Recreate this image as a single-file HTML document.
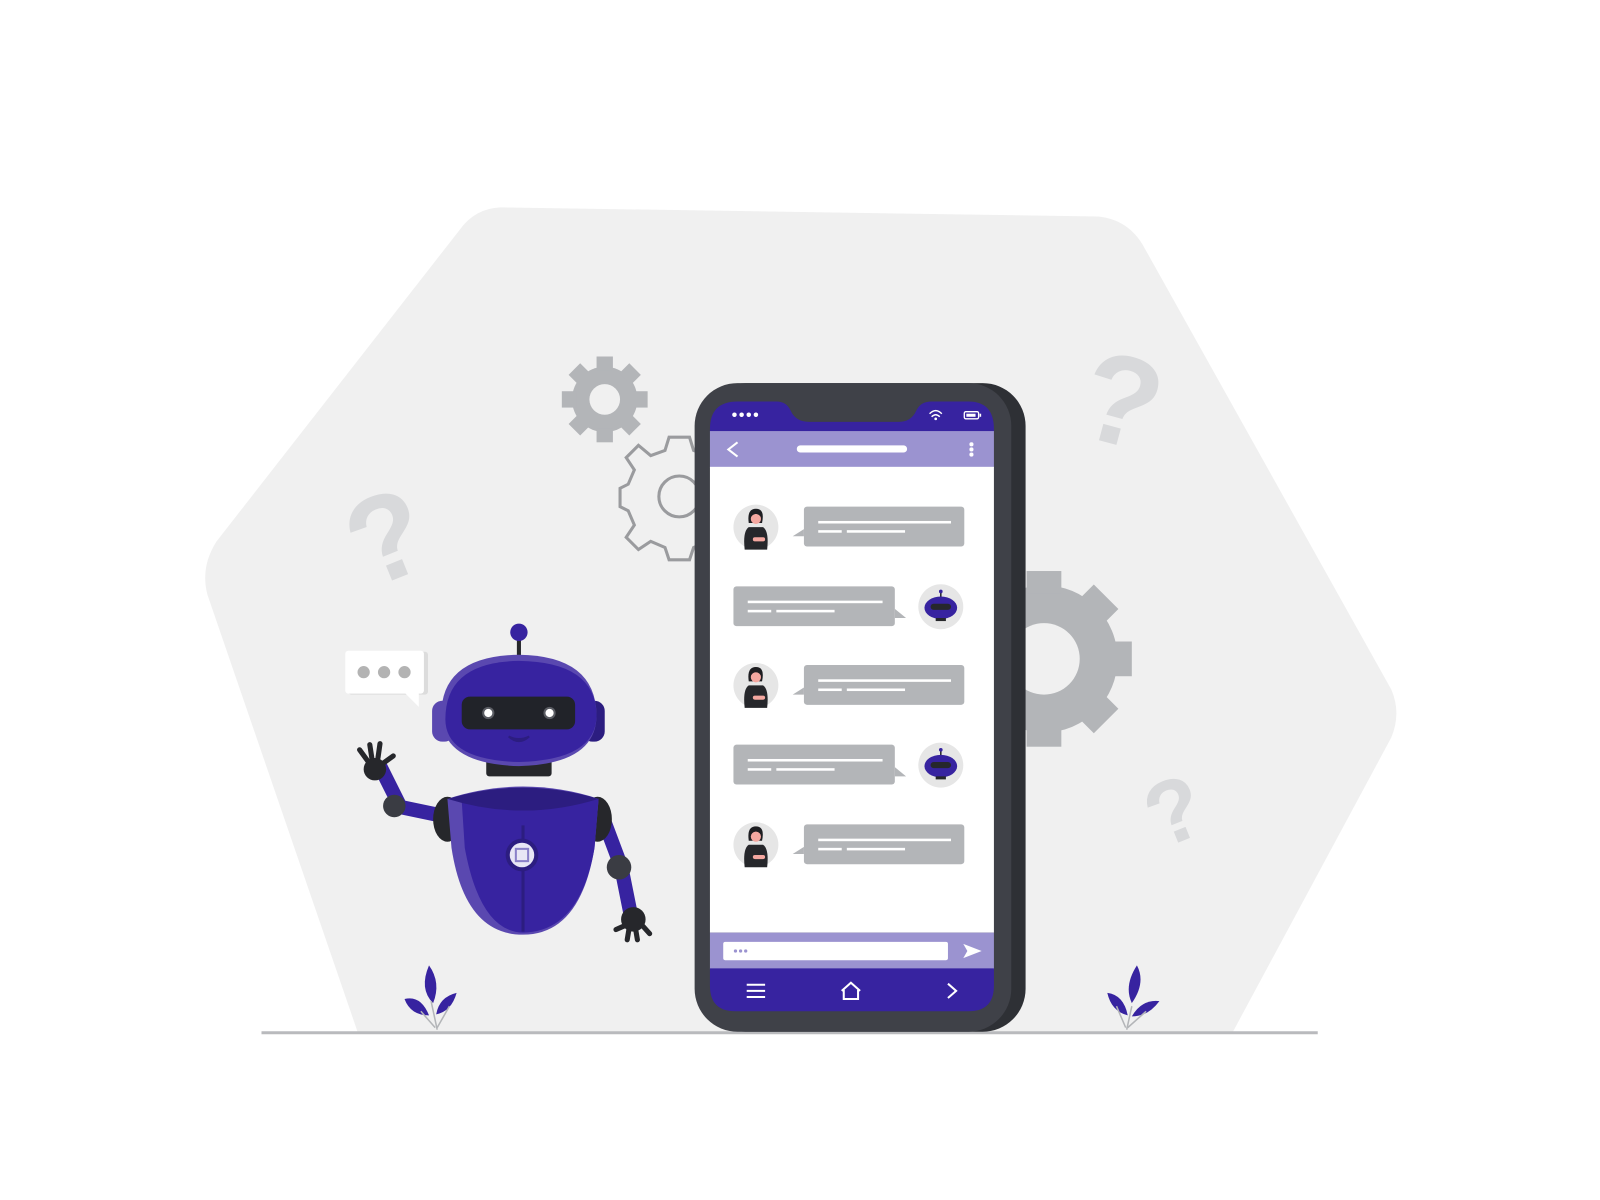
<!DOCTYPE html>
<html><head><meta charset="utf-8"><style>html,body{margin:0;padding:0;background:#fff;width:1600px;height:1200px;overflow:hidden}</style></head>
<body>
<svg width="1600" height="1200" viewBox="0 0 1600 1200" xmlns="http://www.w3.org/2000/svg">
<g transform="scale(1.0215)">
<path d="M490 203 L1075 212 Q1105 215 1120 242 L1362 675 Q1372 698 1362 722 L1207 1010 L350 1010 L203 582 Q196 555 212 530 L450 225 Q465 204 490 203 Z" fill="#f0f0f0"/>
<line x1="256" y1="1011" x2="1290" y2="1011" stroke="#b9babd" stroke-width="3"/>
<g fill="#d8d9db" font-family="Liberation Sans, sans-serif" font-weight="bold">
<text x="0" y="0" font-size="120" transform="translate(360,578) rotate(-22)">?</text>
<text x="0" y="0" font-size="125" transform="translate(1050,424) rotate(15)">?</text>
<text x="0" y="0" font-size="88" transform="translate(1136,832) rotate(-22)">?</text>
</g>
<g transform="translate(592,391)" fill="#b3b5b8">
<circle r="32"/>
<g id="t1"><rect x="-8" y="-42" width="16" height="14"/></g>
<use href="#t1" transform="rotate(45)"/><use href="#t1" transform="rotate(90)"/><use href="#t1" transform="rotate(135)"/><use href="#t1" transform="rotate(180)"/><use href="#t1" transform="rotate(225)"/><use href="#t1" transform="rotate(270)"/><use href="#t1" transform="rotate(315)"/>
<circle r="15" fill="#f0f0f0"/>
</g>
<g transform="translate(665,486)" fill="none" stroke="#9a9b9e" stroke-width="3">
<path d="M-10 -58 L10 -58 L14 -45 L28 -40 L40 -50 L52 -38 L44 -26 L50 -12 L63 -8 L63 10 L50 14 L44 28 L52 40 L40 52 L28 44 L14 50 L10 62 L-10 62 L-14 50 L-28 44 L-40 52 L-52 40 L-44 28 L-50 14 L-58 10 L-58 -8 L-50 -12 L-44 -26 L-52 -38 L-40 -50 L-28 -40 L-14 -45 Z"/>
<circle r="20"/>
</g>
<g transform="translate(1022,645)" fill="#b3b5b8">
<circle r="72"/>
<g id="t2"><rect x="-17" y="-86" width="34" height="22"/></g>
<use href="#t2" transform="rotate(45)"/><use href="#t2" transform="rotate(90)"/><use href="#t2" transform="rotate(135)"/><use href="#t2" transform="rotate(180)"/><use href="#t2" transform="rotate(225)"/><use href="#t2" transform="rotate(270)"/><use href="#t2" transform="rotate(315)"/>
<circle r="35" fill="#f0f0f0"/>
</g>
<rect x="688" y="375" width="316" height="635" rx="42" fill="#2e3035"/>
<rect x="680" y="375" width="310" height="635" rx="42" fill="#3f4148"/>
<path d="M695 420 Q695 393 722 393 L760 393 Q770 393 774 402 Q779 413 792 413 L880 413 Q892 413 897 402 Q901 393 912 393 L948 393 Q973 393 973 420 Z" fill="#3723a0"/>
<rect x="695" y="420" width="278" height="3" fill="#3723a0"/>
<rect x="695" y="422" width="278" height="36" fill="#9b93d0"/>
<rect x="695" y="457" width="278" height="456" fill="#fff"/>
<rect x="695" y="913" width="278" height="36" fill="#9b93d0"/>
<path d="M695 948 L973 948 L973 965 Q973 990 948 990 L720 990 Q695 990 695 965 Z" fill="#3723a0"/>
<g fill="#fff"><circle cx="719" cy="406" r="2.2"/><circle cx="726" cy="406" r="2.2"/><circle cx="733" cy="406" r="2.2"/><circle cx="740" cy="406" r="2.2"/>
<rect x="944" y="403" width="14" height="7" rx="1.5" fill="none" stroke="#fff" stroke-width="1.3"/><rect x="946" y="405" width="9" height="3"/><rect x="959" y="405" width="1.5" height="3"/>
<rect x="780" y="436" width="108" height="7" rx="3.5"/>
<circle cx="951" cy="435" r="2"/><circle cx="951" cy="440" r="2"/><circle cx="951" cy="445" r="2"/>
<rect x="708" y="922" width="220" height="18" rx="2"/>
</g>
<path d="M910 405 Q916 399 922 405 M912 408 Q916 404 920 408" stroke="#fff" stroke-width="1.4" fill="none"/><circle cx="916" cy="410" r="1.3" fill="#fff"/>
<path d="M722 433 L713 440 L722 447" stroke="#fff" stroke-width="2" fill="none"/>
<g fill="#9b93d0"><circle cx="720" cy="931" r="1.6"/><circle cx="725" cy="931" r="1.6"/><circle cx="730" cy="931" r="1.6"/></g>
<path d="M943 924 L961 931 L943 938 L947 931 Z" fill="#fff"/>
<g stroke="#fff" stroke-width="2" fill="none"><path d="M731 964 H749 M731 970 H749 M731 976 H749"/><path d="M824 970 L833 962 L842 970 M826 969 V978 H840 V969"/><path d="M928 963 L936 970 L928 977"/></g>
<defs>
<g id="user"><circle r="22" fill="#e6e6e6"/><path d="M-11 22 Q-13 4 -7 0 L7 0 Q13 4 11 22 Z" fill="#26272b"/><path d="M-7 -4 Q-9 -18 0 -18 Q9 -18 6 -4 Z" fill="#1e1e22"/><circle cy="-8" r="5" fill="#f4a7a0"/><path d="M-5 -10 Q0 -16 5 -10 L5 -13 Q0 -17 -5 -13 Z" fill="#1e1e22"/><rect x="-3" y="10" width="12" height="4" rx="2" fill="#f4a7a0"/></g>
<g id="bot"><circle r="22" fill="#e6e6e6"/><line x1="0" y1="-15" x2="0" y2="-9" stroke="#26272b" stroke-width="1.5"/><circle cy="-15" r="1.8" fill="#3723a0"/><ellipse cy="1" rx="16" ry="11" fill="#3723a0"/><rect x="-10" y="-3" width="20" height="6" rx="3" fill="#26272b"/><rect x="-5" y="11" width="10" height="3" fill="#26272b"/></g>
<g id="ub"><rect x="0" y="0" width="157" height="39" rx="3" fill="#b3b5b8"/><path d="M0 22 L-11 29 L0 29 Z" fill="#b3b5b8"/><rect x="14" y="14" width="130" height="2.5" fill="#fff"/><rect x="14" y="23" width="23" height="2.5" fill="#fff"/><rect x="42" y="23" width="57" height="2.5" fill="#fff"/></g>
<g id="bb"><rect x="0" y="0" width="158" height="39" rx="3" fill="#b3b5b8"/><path d="M158 22 L169 31 L158 31 Z" fill="#b3b5b8"/><rect x="14" y="14" width="132" height="2.5" fill="#fff"/><rect x="14" y="23" width="23" height="2.5" fill="#fff"/><rect x="42" y="23" width="57" height="2.5" fill="#fff"/></g>
</defs>
<use href="#user" x="740" y="516"/><use href="#ub" x="787" y="496"/>
<use href="#bb" x="718" y="574"/><use href="#bot" x="921" y="594"/>
<use href="#user" x="740" y="671"/><use href="#ub" x="787" y="651"/>
<use href="#bb" x="718" y="729"/><use href="#bot" x="921" y="749"/>
<use href="#user" x="740" y="827"/><use href="#ub" x="787" y="807"/>
<g fill="#3723a0" stroke="none">
<path d="M420 945 Q432 962 424 982 Q410 968 420 945 Z"/><path d="M396 978 Q412 974 420 994 Q402 994 396 978 Z"/><path d="M447 972 Q442 990 427 993 Q430 976 447 972 Z"/>
<path d="M1113 945 Q1122 962 1108 982 Q1100 965 1113 945 Z"/><path d="M1084 972 Q1100 974 1104 994 Q1088 990 1084 972 Z"/><path d="M1135 980 Q1124 995 1108 995 Q1118 978 1135 980 Z"/>
</g>
<path d="M422 980 L428 1008 M412 990 L426 1006 M440 985 L428 1006 M1108 985 L1103 1008 M1093 985 L1102 1006 M1122 990 L1104 1006" stroke="#b3b5b8" stroke-width="1.5" fill="none"/>
<rect x="341" y="638" width="78" height="42" rx="3" fill="#dcdcdc"/>
<rect x="338" y="637" width="77" height="42" rx="3" fill="#fff"/>
<path d="M396 678 L410 692 L410 678 Z" fill="#fff"/>
<g fill="#b3b3b3"><circle cx="356" cy="658" r="6"/><circle cx="376" cy="658" r="6"/><circle cx="396" cy="658" r="6"/></g>
<g>
<path d="M372 750 L392 790 L440 800" stroke="#3723a0" stroke-width="14" fill="none" stroke-linejoin="round"/>
<g stroke="#26272b" stroke-width="5" stroke-linecap="round"><line x1="360" y1="745" x2="352" y2="734"/><line x1="364" y1="742" x2="362" y2="729"/><line x1="370" y1="742" x2="372" y2="728"/><line x1="374" y1="748" x2="385" y2="740"/></g>
<circle cx="367" cy="753" r="11" fill="#26272b"/>
<circle cx="386" cy="789" r="11" fill="#3a3c43"/>
<path d="M590 800 L608 848 L618 898" stroke="#3723a0" stroke-width="14" fill="none" stroke-linejoin="round"/>
<g stroke="#26272b" stroke-width="5" stroke-linecap="round"><line x1="612" y1="906" x2="603" y2="910"/><line x1="616" y1="908" x2="614" y2="920"/><line x1="622" y1="908" x2="624" y2="920"/><line x1="627" y1="904" x2="636" y2="914"/></g>
<circle cx="620" cy="900" r="12" fill="#26272b"/>
<circle cx="606" cy="849" r="12" fill="#3a3c43"/>
<ellipse cx="438" cy="802" rx="14" ry="22" fill="#26272b"/>
<ellipse cx="585" cy="802" rx="14" ry="22" fill="#26272b"/>
<path d="M438 782 Q512 758 586 782 L582 830 Q568 915 512 915 Q455 915 442 830 Z" fill="#5a48b0"/>
<path d="M452 784 Q512 762 586 782 L582 830 Q568 912 512 913 Q470 912 455 830 Z" fill="#3723a0"/>
<path d="M438 782 Q512 760 586 782 Q512 805 438 782 Z" fill="#2c1d80"/>
<line x1="512" y1="808" x2="512" y2="912" stroke="#2c1d80" stroke-width="3"/>
<circle cx="511" cy="837" r="16" fill="#2c1d80"/>
<circle cx="511" cy="837" r="12" fill="#e8e6f5"/>
<rect x="505" y="831" width="12" height="12" fill="none" stroke="#8a80c8" stroke-width="2"/>
<rect x="476" y="740" width="64" height="20" rx="3" fill="#26272b"/>
<rect x="423" y="686" width="22" height="40" rx="10" fill="#5a48b0"/>
<rect x="570" y="686" width="22" height="40" rx="10" fill="#2c1d80"/>
<line x1="508" y1="622" x2="508" y2="645" stroke="#26272b" stroke-width="4"/>
<circle cx="508" cy="619" r="8.5" fill="#3723a0"/>
<path d="M432 700 Q432 642 508 641 Q583 642 584 700 Q584 748 508 750 Q432 748 432 700 Z" fill="#5a48b0"/>
<path d="M436 704 Q436 648 508 647 Q583 648 584 700 Q584 744 508 746 Q436 744 436 704 Z" fill="#3723a0"/>
<rect x="452" y="682" width="111" height="32" rx="8" fill="#212329"/>
<circle cx="478" cy="698" r="6" fill="#5a5c63"/><circle cx="478" cy="698" r="4" fill="#fff"/>
<circle cx="538" cy="698" r="6" fill="#5a5c63"/><circle cx="538" cy="698" r="4" fill="#fff"/>
<path d="M498 721 Q508 730 518 721 Q508 726 498 721 Z" fill="#2c1d80" stroke="#2c1d80" stroke-width="2"/>
</g>
</g>
</svg>
</body></html>
